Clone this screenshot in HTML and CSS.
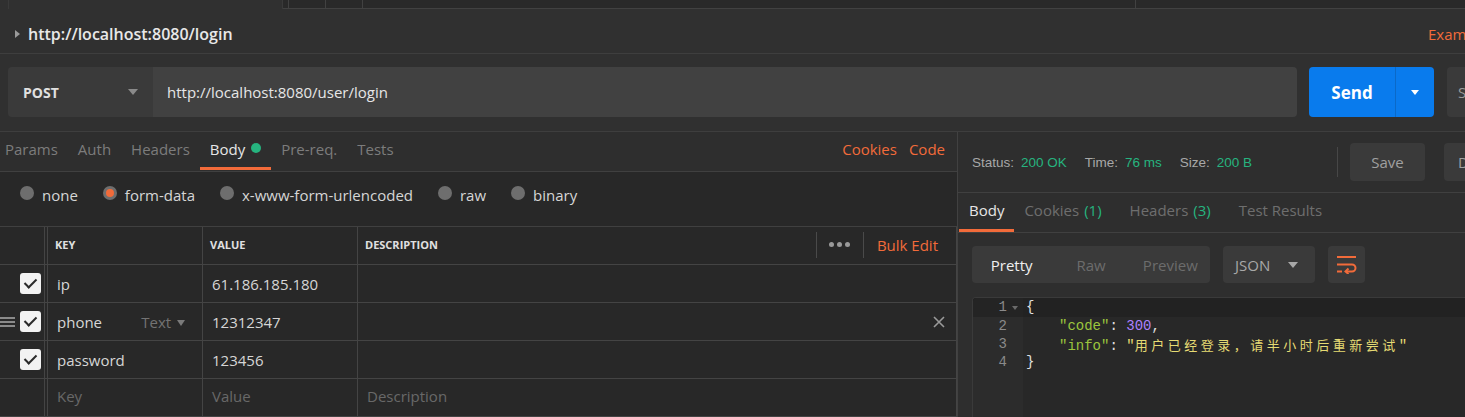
FILE: index.html
```html
<!DOCTYPE html>
<html lang="en">
<head>
    <meta charset="UTF-8">
    <title>Postman - login</title>
    <link rel="stylesheet" href="styles.css">
</head>
<body>
    <div class="tab-strip">
        <div class="tab-edge"></div>
        <div class="tab-item active"></div>
        <div class="tab-item tiny"></div>
        <div class="tab-item narrow"></div>
        <div class="tab-item narrow"></div>
        <div class="tab-item wide"></div>
        <div class="tab-item rest"></div>
    </div>

    <div class="title-bar">
        <span class="caret-right"></span>
        <span class="req-name">http://localhost:8080/login</span>
        <span class="examples">Examples (0)</span>
    </div>

    <div class="url-bar">
        <div class="method">
            <span>POST</span>
            <span class="caret-down"></span>
        </div>
        <div class="url-input">http://localhost:8080/user/login</div>
        <div class="send">
            <span class="send-label">Send</span>
            <span class="send-menu"><span class="caret-down white"></span></span>
        </div>
        <div class="save-top">Save</div>
    </div>

    <div class="main">
        <section class="request">
            <div class="req-tabs">
                <ul class="tab-list">
                    <li>Params</li>
                    <li>Auth</li>
                    <li>Headers</li>
                    <li class="active">Body <span class="dot"></span></li>
                    <li>Pre-req.</li>
                    <li>Tests</li>
                </ul>
                <div class="req-links">
                    <span>Cookies</span>
                    <span>Code</span>
                </div>
            </div>

            <div class="body-types">
                <label class="radio"><span class="radio-dot"></span>none</label>
                <label class="radio"><span class="radio-dot checked"></span>form-data</label>
                <label class="radio"><span class="radio-dot"></span>x-www-form-urlencoded</label>
                <label class="radio"><span class="radio-dot"></span>raw</label>
                <label class="radio"><span class="radio-dot"></span>binary</label>
            </div>

            <div class="kv-table">
                <div class="kv-row kv-head">
                    <div class="cell check"></div>
                    <div class="cell gap"></div>
                    <div class="cell">Key</div>
                    <div class="cell">Value</div>
                    <div class="cell desc">
                        <span>Description</span>
                        <div class="head-tools">
                            <span class="vsep"></span>
                            <span class="dots"><i></i><i></i><i></i></span>
                            <span class="vsep"></span>
                            <span class="bulk">Bulk Edit</span>
                        </div>
                    </div>
                </div>
                <div class="kv-row">
                    <div class="cell check"><span class="checkbox"></span></div>
                    <div class="cell gap"></div>
                    <div class="cell">ip</div>
                    <div class="cell">61.186.185.180</div>
                    <div class="cell desc"></div>
                </div>
                <div class="kv-row">
                    <div class="cell check">
                        <span class="handle"><i></i><i></i><i></i></span>
                        <span class="checkbox"></span>
                    </div>
                    <div class="cell gap"></div>
                    <div class="cell key-type">
                        <span>phone</span>
                        <span class="type">Text <span class="caret-down small"></span></span>
                    </div>
                    <div class="cell">12312347</div>
                    <div class="cell desc">
                        <span></span>
                        <svg class="remove" width="12" height="12" viewBox="0 0 12 12">
                            <path d="M1 1L11 11M11 1L1 11" stroke="#9a9a9a" stroke-width="1.6" fill="none"/>
                        </svg>
                    </div>
                </div>
                <div class="kv-row">
                    <div class="cell check"><span class="checkbox"></span></div>
                    <div class="cell gap"></div>
                    <div class="cell">password</div>
                    <div class="cell">123456</div>
                    <div class="cell desc"></div>
                </div>
                <div class="kv-row placeholder">
                    <div class="cell check"></div>
                    <div class="cell gap"></div>
                    <div class="cell">Key</div>
                    <div class="cell">Value</div>
                    <div class="cell desc">Description</div>
                </div>
            </div>
        </section>

        <section class="response">
            <div class="status-bar">
                <div class="stats">
                    <span class="stat"><span class="stat-label">Status:</span><span class="stat-value">200 OK</span></span>
                    <span class="stat"><span class="stat-label">Time:</span><span class="stat-value">76 ms</span></span>
                    <span class="stat"><span class="stat-label">Size:</span><span class="stat-value">200 B</span></span>
                </div>
                <span class="vsep tall"></span>
                <div class="btn save">Save</div>
                <div class="btn download">Download</div>
            </div>

            <div class="res-tabs">
                <span class="active">Body</span>
                <span class="counted">Cookies <b>(1)</b></span>
                <span class="counted">Headers <b>(3)</b></span>
                <span>Test Results</span>
            </div>

            <div class="res-body">
                <div class="toolbar">
                    <div class="view-group">
                        <span class="on">Pretty</span>
                        <span>Raw</span>
                        <span>Preview</span>
                    </div>
                    <div class="format">
                        <span>JSON</span>
                        <span class="caret-down"></span>
                    </div>
                    <div class="wrap-btn">
                        <svg width="21" height="19" viewBox="0 0 21 19">
                            <path d="M1 2H20M1 9.5H16a3.5 3.5 0 0 1 0 7H10M1 16.5H6" stroke="#f26b3a" stroke-width="2" fill="none"/>
                            <path d="M12.5 13.5L9.5 16.5L12.5 19" stroke="#f26b3a" stroke-width="2" fill="none"/>
                        </svg>
                    </div>
                </div>

                <div class="editor">
                    <div class="line current">
                        <span class="ln">1<span class="fold"></span></span>
                        <span class="code">{</span>
                    </div>
                    <div class="line">
                        <span class="ln">2</span>
                        <span class="code"><span class="indent"></span><span class="k">"code"</span>: <span class="n">300</span>,</span>
                    </div>
                    <div class="line">
                        <span class="ln">3</span>
                        <span class="code"><span class="indent"></span><span class="k">"info"</span>: <span class="s">"<span class="cjk">用户已经登录，请半小时后重新尝试</span>"</span></span>
                    </div>
                    <div class="line">
                        <span class="ln">4</span>
                        <span class="code">}</span>
                    </div>
                    <div class="line filler">
                        <span class="ln"></span>
                        <span class="code"></span>
                    </div>
                </div>
            </div>
        </section>
    </div>
</body>
</html>
```

FILE: styles.css
```css
/* genel */
* {
    box-sizing: border-box;
}
body {
    margin: 0;
    width: 1465px;
    height: 417px;
    overflow: hidden;
    background-color: #303030;
    color: #d6d6d6;
    font-family: "Open Sans", "Liberation Sans", sans-serif;
    font-size: 15px;
    display: flex;
    flex-direction: column;
}
ul {
    margin: 0;
    padding: 0;
    list-style: none;
}

/* ust sekmeler */
.tab-strip {
    display: flex;
    height: 9px;
    flex: none;
}
.tab-item,
.tab-edge {
    height: 9px;
    background-color: #292929;
    border-bottom: 1px solid #414141;
    border-right: 1px solid #414141;
}
.tab-edge {
    width: 8px;
    border-right: none;
    background-color: #303030;
    border-bottom: none;
}
.tab-item.active {
    width: 275px;
    background-color: #303030;
    border-bottom: none;
    border-left: 1px solid #3a3a3a;
    border-right: 1px solid #3a3a3a;
}
.tab-item.tiny { width: 6px; }
.tab-item.narrow { width: 37px; }
.tab-item.wide { width: 773px; }
.tab-item.rest { flex: 1; border-right: none; }

/* baslik */
.title-bar {
    height: 45px;
    flex: none;
    display: flex;
    align-items: center;
    padding: 6px 0 0 15px;
    border-bottom: 1px solid #3e3e3e;
}
.caret-right {
    width: 0;
    height: 0;
    border-top: 4.5px solid transparent;
    border-bottom: 4.5px solid transparent;
    border-left: 5px solid #9a9a9a;
    margin-right: 8px;
}
.req-name {
    font-size: 16px;
    font-weight: 600;
    color: #e8e8e8;
}
.examples {
    margin-left: auto;
    width: 37px;
    overflow: hidden;
    white-space: nowrap;
    color: #f26b3a;
}

/* url satiri */
.url-bar {
    height: 77px;
    flex: none;
    display: flex;
    padding: 13px 0 14px 8px;
    overflow: hidden;
}
.method {
    width: 145px;
    flex: none;
    display: flex;
    align-items: center;
    justify-content: space-between;
    padding: 0 15px;
    background-color: #3a3a3a;
    border-radius: 4px 0 0 4px;
    font-size: 14px;
    font-weight: 700;
    color: #e0e0e0;
}
.caret-down {
    display: inline-block;
    width: 0;
    height: 0;
    border-left: 5px solid transparent;
    border-right: 5px solid transparent;
    border-top: 6px solid #8a8a8a;
}
.caret-down.white {
    border-top-color: #ffffff;
    border-left-width: 4.5px;
    border-right-width: 4.5px;
    border-top-width: 5px;
}
.caret-down.small {
    border-left-width: 4.5px;
    border-right-width: 4.5px;
    border-top-width: 6px;
    border-top-color: #7a7a7a;
    vertical-align: 2px;
    margin-left: 2px;
}
.url-input {
    width: 1144px;
    flex: none;
    display: flex;
    align-items: center;
    padding-left: 14px;
    background-color: #414141;
    border-radius: 0 4px 4px 0;
    color: #e6e6e6;
}
.send {
    width: 125px;
    flex: none;
    margin-left: 12px;
    display: flex;
    background-color: #097bed;
    border-radius: 4px;
    color: #ffffff;
}
.send-label {
    width: 87px;
    display: flex;
    align-items: center;
    justify-content: center;
    font-size: 17px;
    font-weight: 700;
    border-right: 1px solid #0a69c8;
}
.send-menu {
    flex: 1;
    display: flex;
    align-items: center;
    justify-content: center;
}
.save-top {
    width: 100px;
    flex: none;
    margin-left: 13px;
    display: flex;
    align-items: center;
    padding-left: 11px;
    background-color: #3a3a3a;
    border-radius: 4px;
    color: #9a9a9a;
}

/* ana bolum */
.main {
    flex: 1;
    display: flex;
    border-top: 1px solid #3e3e3e;
    min-height: 0;
}
.request {
    width: 958px;
    flex: none;
    display: flex;
    flex-direction: column;
    border-right: 1px solid #414141;
}
.req-tabs {
    height: 40px;
    flex: none;
    display: flex;
    align-items: stretch;
    background-color: #2e2e2e;
    border-bottom: 1px solid #404040;
}
.tab-list {
    display: flex;
    margin-left: -5px;
}
.tab-list li {
    position: relative;
    display: flex;
    align-items: center;
    padding: 0 10px 6px;
    color: #7c7c7c;
}
.tab-list li.active {
    color: #e6e6e6;
}
.tab-list li.active::after {
    content: "";
    position: absolute;
    left: 0;
    right: 0;
    bottom: 1px;
    height: 3px;
    background-color: #f26b3a;
}
.dot {
    width: 10px;
    height: 10px;
    margin-left: 6px;
    margin-bottom: 1px;
    border-radius: 50%;
    background-color: #26b47f;
}
.req-links {
    margin-left: auto;
    display: flex;
    align-items: center;
    gap: 12px;
    padding: 0 12px 6px 0;
    color: #f26b3a;
}

.body-types {
    height: 55px;
    flex: none;
    display: flex;
    align-items: center;
    gap: 25px;
    padding: 0 0 8px 20px;
    background-color: #282828;
    border-bottom: 1px solid #404040;
}
.radio {
    display: flex;
    align-items: center;
    gap: 8px;
    color: #d6d6d6;
}
.radio-dot {
    width: 14px;
    height: 14px;
    margin-bottom: 5px;
    border-radius: 50%;
    background-color: #6e6e6e;
    display: flex;
    align-items: center;
    justify-content: center;
}
.radio-dot.checked::after {
    content: "";
    width: 8px;
    height: 8px;
    border-radius: 50%;
    background-color: #f26b3a;
}

/* tablo */
.kv-table {
    flex: 1;
    background-color: #282828;
}
.kv-row {
    display: grid;
    grid-template-columns: 45px 3px 155px 155px 1fr;
    height: 38px;
    border-bottom: 1px solid #444444;
}
.cell {
    display: flex;
    align-items: center;
    padding-left: 9px;
    border-right: 1px solid #444444;
    white-space: nowrap;
}
.cell.gap {
    padding: 0;
}
.cell.check {
    justify-content: flex-end;
    padding: 0 3px 0 0;
}
.kv-head .cell {
    padding: 0 0 2px 7px;
    font-size: 11px;
    font-weight: 700;
    text-transform: uppercase;
    color: #e0e0e0;
}
.kv-head .cell.check,
.kv-head .cell.gap {
    padding: 0;
}
.cell.desc {
    justify-content: space-between;
    padding-right: 11px;
}
.kv-head .cell.desc {
    padding-right: 18px;
}
.placeholder .cell {
    padding-bottom: 3px;
}
.head-tools {
    display: flex;
    align-items: center;
    text-transform: none;
    font-weight: 400;
}
.vsep {
    width: 1px;
    height: 26px;
    background-color: #4a4a4a;
}
.dots {
    display: flex;
    gap: 3px;
    padding: 0 13px 0 12px;
}
.dots i {
    width: 5px;
    height: 5px;
    border-radius: 50%;
    background-color: #9a9a9a;
}
.kv-head .bulk {
    padding-left: 13px;
    font-size: 15px;
    color: #f26b3a;
}
.checkbox {
    width: 21px;
    height: 21px;
    border-radius: 3px;
    background-color: #f2f2f2;
    position: relative;
}
.checkbox::after {
    content: "";
    position: absolute;
    left: 7px;
    top: 3px;
    width: 5px;
    height: 10px;
    border-right: 2.5px solid #2a2a2a;
    border-bottom: 2.5px solid #2a2a2a;
    transform: rotate(45deg);
}
.handle {
    display: flex;
    flex-direction: column;
    gap: 2px;
    margin-right: auto;
}
.handle i {
    width: 15px;
    height: 2px;
    background-color: #8a8a8a;
}
.key-type {
    justify-content: space-between;
    padding-right: 17px;
}
.type {
    color: #737373;
}
.placeholder .cell {
    color: #686868;
}

/* yanit */
.response {
    flex: 1;
    display: flex;
    flex-direction: column;
    background-color: #2e2e2e;
    min-width: 0;
}
.status-bar {
    height: 61px;
    flex: none;
    display: flex;
    align-items: center;
    padding-left: 14px;
    border-bottom: 1px solid #404040;
    font-family: "Liberation Sans", Arial, sans-serif;
    font-size: 13.5px;
}
.stats {
    width: 365px;
    flex: none;
    display: flex;
    gap: 18px;
}
.stat {
    display: flex;
    gap: 7px;
}
.stat-label {
    color: #a8a8a8;
}
.stat-value {
    color: #26b47f;
}
.vsep.tall {
    height: 30px;
    flex: none;
    background-color: #474747;
}
.btn {
    height: 38px;
    flex: none;
    display: flex;
    align-items: center;
    background-color: #3a3a3a;
    border-radius: 4px;
    color: #a0a0a0;
    font-family: "Open Sans", sans-serif;
    font-size: 15px;
}
.btn.save {
    width: 75px;
    margin-left: 12px;
    justify-content: center;
}
.btn.download {
    width: 100px;
    margin-left: 19px;
    padding-left: 14px;
}

.res-tabs {
    height: 40px;
    flex: none;
    display: flex;
    border-bottom: 1px solid #404040;
    padding-left: 1px;
}
.res-tabs span {
    position: relative;
    display: flex;
    align-items: center;
    padding: 0 10px 5px;
    color: #6e6e6e;
}
.res-tabs span.counted {
    padding-right: 18px;
}
.res-tabs b {
    font-weight: 400;
    color: #26b47f;
    margin-left: 5px;
}
.res-tabs span.active {
    color: #e6e6e6;
}
.res-tabs span.active::after {
    content: "";
    position: absolute;
    left: 0;
    right: 0;
    bottom: 0;
    height: 3px;
    background-color: #f26b3a;
}

.res-body {
    flex: 1;
    display: flex;
    flex-direction: column;
    padding: 13px 0 0 14px;
    min-height: 0;
}
.toolbar {
    height: 37px;
    flex: none;
    display: flex;
    gap: 13px;
}
.view-group {
    width: 238px;
    display: flex;
    background-color: #3a3a3a;
    border-radius: 4px;
}
.view-group span {
    flex: 1;
    display: flex;
    align-items: center;
    justify-content: center;
    color: #6c6c6c;
}
.view-group span.on {
    color: #f0f0f0;
}
.format {
    width: 92px;
    display: flex;
    align-items: center;
    justify-content: space-between;
    padding: 0 17px 0 12px;
    background-color: #3a3a3a;
    border-radius: 4px;
    color: #a8a8a8;
}
.format .caret-down {
    border-top-color: #a8a8a8;
}
.wrap-btn {
    width: 37px;
    display: flex;
    align-items: center;
    justify-content: center;
    background-color: #3a3a3a;
    border-radius: 4px;
}

.editor {
    flex: 1;
    margin-top: 14px;
    display: flex;
    flex-direction: column;
    border-top: 1px solid #3a3a3a;
    border-left: 1px solid #3a3a3a;
    border-radius: 4px 0 0 0;
    background-color: #282828;
    font-family: "Liberation Mono", "DejaVu Sans Mono", monospace;
    font-size: 14px;
    overflow: hidden;
}
.line {
    height: 18px;
    display: flex;
    line-height: 19px;
}
.line.current {
    height: 19px;
    line-height: 19px;
    background-color: #222222;
}
.line.filler {
    flex: 1;
}
.ln {
    width: 50px;
    flex: none;
    text-align: right;
    padding-right: 16px;
    color: #8a8a8a;
    background-color: #2c2c2c;
    position: relative;
}
.current .ln {
    background-color: #242424;
}
.fold {
    position: absolute;
    right: 5px;
    top: 8px;
    width: 0;
    height: 0;
    border-left: 3.5px solid transparent;
    border-right: 3.5px solid transparent;
    border-top: 4px solid #6a6a6a;
}
.code {
    padding-left: 3px;
    color: #e0e0e0;
    white-space: pre;
}
.indent {
    display: inline-block;
    width: 33px;
}
.k { color: #9bc53d; }
.n { color: #ae81ff; }
.s { color: #e6db74; }
.cjk {
    font-family: "Noto Sans CJK SC", sans-serif;
    font-size: 13px;
    letter-spacing: 3.5px;
}
```
